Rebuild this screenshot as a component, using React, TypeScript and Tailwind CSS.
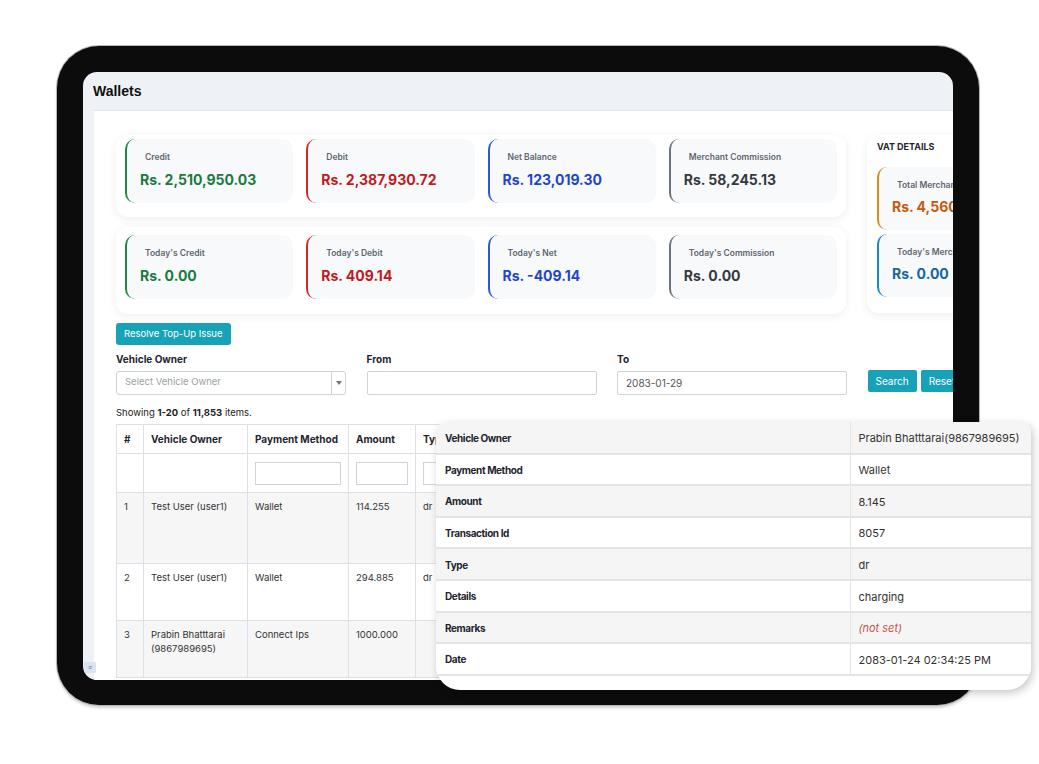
import React from 'react';

type Stat = { label: string; value: string; border: string; text: string };

const topStats: Stat[] = [
  { label: 'Credit', value: 'Rs. 2,510,950.03', border: 'border-[#1e8a45]', text: 'text-[#1b7a3e]' },
  { label: 'Debit', value: 'Rs. 2,387,930.72', border: 'border-[#d42a2a]', text: 'text-[#bf1b22]' },
  { label: 'Net Balance', value: 'Rs. 123,019.30', border: 'border-[#2a5bd7]', text: 'text-[#1f47c4]' },
  { label: 'Merchant Commission', value: 'Rs. 58,245.13', border: 'border-[#6c757d]', text: 'text-[#343a40]' },
];

const todayStats: Stat[] = [
  { label: "Today's Credit", value: 'Rs. 0.00', border: 'border-[#1e8a45]', text: 'text-[#1b7a3e]' },
  { label: "Today's Debit", value: 'Rs. 409.14', border: 'border-[#d42a2a]', text: 'text-[#bf1b22]' },
  { label: "Today's Net", value: 'Rs. -409.14', border: 'border-[#2a5bd7]', text: 'text-[#1f47c4]' },
  { label: "Today's Commission", value: 'Rs. 0.00', border: 'border-[#6c757d]', text: 'text-[#343a40]' },
];

const details: [string, string][] = [
  ['Vehicle Owner', 'Prabin Bhatttarai(9867989695)'],
  ['Payment Method', 'Wallet'],
  ['Amount', '8.145'],
  ['Transaction Id', '8057'],
  ['Type', 'dr'],
  ['Details', 'charging'],
  ['Remarks', ''],
  ['Date', '2083-01-24 02:34:25 PM'],
];

const rows = [
  { n: '1', owner: 'Test User (user1)', method: 'Wallet', amount: '114.255', type: 'dr', h: 'h-[71px]', bg: 'bg-[#f6f6f6]' },
  { n: '2', owner: 'Test User (user1)', method: 'Wallet', amount: '294.885', type: 'dr', h: 'h-[57px]', bg: 'bg-white' },
  { n: '3', owner: 'Prabin Bhatttarai (9867989695)', method: 'Connect Ips', amount: '1000.000', type: '', h: 'h-[57px]', bg: 'bg-[#f6f6f6]' },
];

const StatCard = ({ s }: { s: Stat }) => (
  <div className={`h-[64px] rounded-[10px] border-l-2 ${s.border} bg-[#f7f9fb] pt-[12px]`}>
    <div className="pl-[18px] text-[8.5px] font-semibold leading-[12px] text-[#5f6670]">{s.label}</div>
    <div className={`mt-[7.5px] pl-[13px] text-[14px] font-bold leading-[18px] whitespace-nowrap ${s.text}`}>{s.value}</div>
  </div>
);

const App: React.FC = () => {
  return (
    <div className="relative w-[1039px] h-[764px] overflow-hidden bg-white pl-[57px] pt-[46px] font-['Inter',sans-serif] text-[#212529]">
      {/* tablet */}
      <div className="w-[922px] h-[659px] rounded-[42px] bg-[#0c0c0c] p-[26px] shadow-[0_0_0_1px_#b5b5b5,0_3px_3px_rgba(0,0,0,0.18)]">
        <div className="relative w-[870px] h-[608px] overflow-hidden rounded-[14px] bg-[#eef1f5]">
          <div className="h-[38px] flex items-center pl-[10px] font-['Liberation_Sans',sans-serif] text-[14px] font-bold text-[#111]">
            Wallets
          </div>
          <div className="ml-[11px] w-[1000px] h-[570px] border-t border-[#e3e6ea] bg-white pl-[22px] pt-[24px]">
            {/* stats */}
            <div className="flex items-start gap-[21px]">
              <div className="w-[730px] flex flex-col gap-[10px]">
                <div className="rounded-[12px] bg-white px-[9px] pt-[4px] pb-[14px] shadow-[0_2px_10px_rgba(0,0,0,0.07)]">
                  <div className="grid grid-cols-4 gap-[13px]">
                    {topStats.map((s) => (
                      <StatCard key={s.label} s={s} />
                    ))}
                  </div>
                </div>
                <div className="rounded-[12px] bg-white px-[9px] pt-[8px] pb-[15px] shadow-[0_2px_10px_rgba(0,0,0,0.07)]">
                  <div className="grid grid-cols-4 gap-[13px]">
                    {todayStats.map((s) => (
                      <StatCard key={s.label} s={s} />
                    ))}
                  </div>
                </div>
              </div>
              <div className="w-[200px] h-[178px] rounded-[12px] bg-white px-[10px] pt-[6px] shadow-[0_2px_10px_rgba(0,0,0,0.07)]">
                <div className="text-[9px] font-bold leading-[12px] text-[#1f2530]">VAT DETAILS</div>
                <div className="mt-[14px] flex flex-col gap-[4px]">
                  <div className="h-[63px] rounded-[10px] border-l-2 border-[#e08a1e] bg-[#f7f9fb] pt-[12px]">
                    <div className="pl-[18px] text-[8.5px] font-semibold leading-[12px] text-[#5f6670] whitespace-nowrap">Total Merchant VAT</div>
                    <div className="mt-[7px] pl-[13px] text-[14px] font-bold leading-[18px] text-[#c45a0c] whitespace-nowrap">Rs. 4,560.21</div>
                  </div>
                  <div className="h-[63px] rounded-[10px] border-l-2 border-[#1a86cc] bg-[#f7f9fb] pt-[12px]">
                    <div className="pl-[18px] text-[8.5px] font-semibold leading-[12px] text-[#5f6670] whitespace-nowrap">Today's Merchant VAT</div>
                    <div className="mt-[7px] pl-[13px] text-[14px] font-bold leading-[18px] text-[#1a64a0] whitespace-nowrap">Rs. 0.00</div>
                  </div>
                </div>
              </div>
            </div>

            <button className="mt-[9px] h-[22px] rounded-[3px] bg-[#17a2b8] px-[8px] text-[9.5px] text-white">
              Resolve Top-Up Issue
            </button>

            {/* filters */}
            <div className="mt-[8px] grid grid-cols-[230px_230px_230px_auto] gap-x-[20.5px] items-end">
              <div>
                <div className="text-[10px] font-bold leading-[12px] text-[#1f2530]">Vehicle Owner</div>
                <div className="mt-[6px] flex h-[24px] rounded-[3px] border border-[#ced4da]">
                  <div className="flex-1 pl-[8px] pt-[3px] text-[9.5px] text-[#9aa0a6]">Select Vehicle Owner</div>
                  <div className="w-[14px] border-l border-[#ced4da] flex items-center justify-center">
                    <svg width="6" height="4" viewBox="0 0 6 4"><path d="M0 0h6L3 4z" fill="#777" /></svg>
                  </div>
                </div>
              </div>
              <div>
                <div className="text-[10px] font-bold leading-[12px] text-[#1f2530]">From</div>
                <div className="mt-[6px] h-[24px] rounded-[2px] border border-[#ced4da]" />
              </div>
              <div>
                <div className="text-[10px] font-bold leading-[12px] text-[#1f2530]">To</div>
                <div className="mt-[6px] h-[24px] rounded-[2px] border border-[#ced4da] pl-[8px] flex items-center text-[10px] text-[#555]">
                  2083-01-29
                </div>
              </div>
              <div className="flex gap-[4px] pb-[3px]">
                <button className="h-[22px] rounded-[2px] bg-[#17a2b8] px-[8px] text-[10px] text-white">Search</button>
                <button className="h-[22px] rounded-[2px] bg-[#17a2b8] px-[8px] text-[10px] text-white">Reset</button>
              </div>
            </div>

            <div className="mt-[12px] text-[9.5px] leading-[12px] text-[#222]">
              Showing <b>1-20</b> of <b>11,853</b> items.
            </div>

            {/* table */}
            <table className="mt-[5px] border-collapse text-[9.5px] text-[#333]">
              <thead>
                <tr className="h-[29px] text-[10px] font-bold text-[#1f2530]">
                  <th className="w-[27px] border border-[#dcdfe3] px-[7px] text-left">#</th>
                  <th className="w-[104px] border border-[#dcdfe3] px-[7px] text-left">Vehicle Owner</th>
                  <th className="w-[101px] border border-[#dcdfe3] px-[7px] text-left">Payment Method</th>
                  <th className="w-[67px] border border-[#dcdfe3] px-[7px] text-left">Amount</th>
                  <th className="w-[60px] border border-[#dcdfe3] px-[7px] text-left">Type</th>
                  <th className="w-[120px] border border-[#dcdfe3] px-[7px] text-left">Details</th>
                  <th className="w-[120px] border border-[#dcdfe3] px-[7px] text-left">Date</th>
                </tr>
                <tr className="h-[39px]">
                  <td className="border border-[#dcdfe3]" />
                  <td className="border border-[#dcdfe3]" />
                  <td className="border border-[#dcdfe3] px-[7px]"><div className="h-[23px] border border-[#ced4da]" /></td>
                  <td className="border border-[#dcdfe3] px-[7px]"><div className="h-[23px] border border-[#ced4da]" /></td>
                  <td className="border border-[#dcdfe3] px-[7px]"><div className="h-[23px] border border-[#ced4da]" /></td>
                  <td className="border border-[#dcdfe3] px-[7px]"><div className="h-[23px] border border-[#ced4da]" /></td>
                  <td className="border border-[#dcdfe3] px-[7px]"><div className="h-[23px] border border-[#ced4da]" /></td>
                </tr>
              </thead>
              <tbody>
                {rows.map((r) => (
                  <tr key={r.n} className={`${r.h} ${r.bg} align-top leading-[14px]`}>
                    <td className="border border-[#dcdfe3] px-[7px] pt-[7px]">{r.n}</td>
                    <td className="border border-[#dcdfe3] px-[7px] pt-[7px]">{r.owner}</td>
                    <td className="border border-[#dcdfe3] px-[7px] pt-[7px]">{r.method}</td>
                    <td className="border border-[#dcdfe3] px-[7px] pt-[7px]">{r.amount}</td>
                    <td className="border border-[#dcdfe3] px-[7px] pt-[7px]">{r.type}</td>
                    <td className="border border-[#dcdfe3] px-[7px] pt-[7px]">charging</td>
                    <td className="border border-[#dcdfe3] px-[7px] pt-[7px]">2083-01-24</td>
                  </tr>
                ))}
              </tbody>
            </table>
          </div>
          <div className="absolute left-[1px] bottom-[7px] w-[12px] h-[11px] rounded-[1px] bg-[#dbe4f0] text-[7px] leading-[11px] text-center text-[#6a7a90]">≡</div>
        </div>
      </div>

      {/* detail overlay card */}
      <div className="absolute left-[436px] top-[422px] w-[595px] h-[268px] overflow-hidden rounded-t-[10px] rounded-b-[24px] bg-white shadow-[2px_3px_8px_rgba(0,0,0,0.22)]">
        <table className="w-full border-collapse text-[11px]">
          <tbody>
            {details.map(([k, v], i) => (
              <tr key={k} className={`h-[31.6px] ${i % 2 === 0 ? 'bg-[#f5f5f5]' : 'bg-white'}`}>
                <th className="w-[414px] border-b-2 border-r border-[#e4e4e4] pl-[9px] pt-[2px] text-left text-[10px] font-bold tracking-[-0.4px] text-[#1f2530]">{k}</th>
                <td className="border-b-2 border-[#e4e4e4] pl-[8px] pt-[2px] text-[#333]">
                  {v ? v : <span className="italic text-[#c9534f]">(not set)</span>}
                </td>
              </tr>
            ))}
          </tbody>
        </table>
      </div>
    </div>
  );
};

export default App;
